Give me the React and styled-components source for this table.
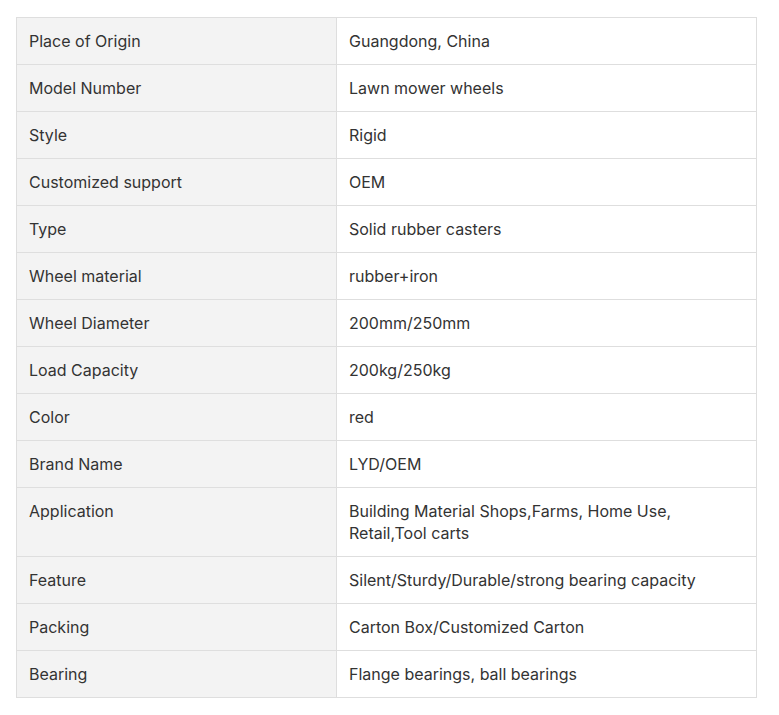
import React from "react"
import styled, { createGlobalStyle } from "styled-components"

const GlobalStyle = createGlobalStyle`
  body {
    margin: 0;
    background: #fff;
    font-family: Inter, "Noto Sans", sans-serif;
  }
`

const specs = [
  ["Place of Origin", "Guangdong, China"],
  ["Model Number", "Lawn mower wheels"],
  ["Style", "Rigid"],
  ["Customized support", "OEM"],
  ["Type", "Solid rubber casters"],
  ["Wheel material", "rubber+iron"],
  ["Wheel Diameter", "200mm/250mm"],
  ["Load Capacity", "200kg/250kg"],
  ["Color", "red"],
  ["Brand Name", "LYD/OEM"],
  ["Application", "Building Material Shops,Farms, Home Use, Retail,Tool carts"],
  ["Feature", "Silent/Sturdy/Durable/strong bearing capacity"],
  ["Packing", "Carton Box/Customized Carton"],
  ["Bearing", "Flange bearings, ball bearings"],
]

const App = () => {
  return (
    <Page>
      <GlobalStyle />
      <SpecTable>
        <tbody>
          {specs.map(([label, value]) => (
            <tr key={label}>
              <LabelCell>{label}</LabelCell>
              <ValueCell>{value}</ValueCell>
            </tr>
          ))}
        </tbody>
      </SpecTable>
    </Page>
  )
}

export default App

const Page = styled.div`
  padding: 17px 22px 17px 16px;
`

const SpecTable = styled.table`
  width: 741px;
  border-collapse: collapse;
  table-layout: fixed;
  border: 1px solid #dedede;
`

const Cell = styled.td`
  border: 1px solid #dedede;
  padding: 12px 12px;
  font-size: 16px;
  line-height: 22px;
  color: #333;
  vertical-align: top;
  text-align: left;
`

const LabelCell = styled(Cell)`
  width: 295px;
  background: #f3f3f3;
`

const ValueCell = styled(Cell)`
  background: #fff;
  padding-right: 30px;
`
